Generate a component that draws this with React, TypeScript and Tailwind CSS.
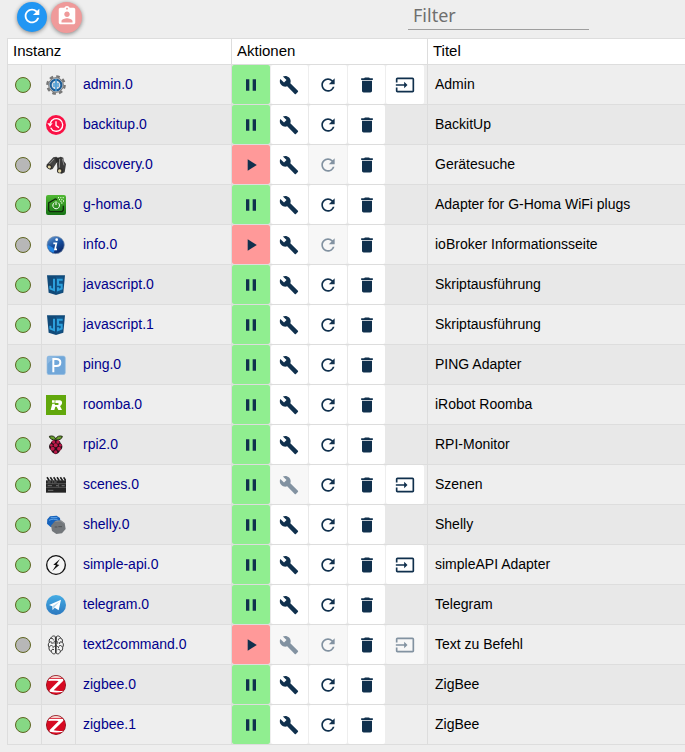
/**
 * Instances page - adapter list with status, actions and titles.
 */

import type { ReactNode } from 'react';
import { MdAssignmentInd, MdBuild, MdDelete, MdInput, MdPause, MdPlayArrow, MdRefresh } from 'react-icons/md';

type IconName =
  | 'admin'
  | 'backitup'
  | 'discovery'
  | 'ghoma'
  | 'info'
  | 'javascript'
  | 'ping'
  | 'roomba'
  | 'rpi'
  | 'scenes'
  | 'shelly'
  | 'simpleapi'
  | 'telegram'
  | 'text2command'
  | 'zigbee';

interface Instance {
  id: string;
  icon: IconName;
  title: string;
  running: boolean;
  config: boolean;
  link?: boolean;
}

const INSTANCES: Instance[] = [
  { id: 'admin.0', icon: 'admin', title: 'Admin', running: true, config: true, link: true },
  { id: 'backitup.0', icon: 'backitup', title: 'BackitUp', running: true, config: true },
  { id: 'discovery.0', icon: 'discovery', title: 'Gerätesuche', running: false, config: true },
  { id: 'g-homa.0', icon: 'ghoma', title: 'Adapter for G-Homa WiFi plugs', running: true, config: true },
  { id: 'info.0', icon: 'info', title: 'ioBroker Informationsseite', running: false, config: true },
  { id: 'javascript.0', icon: 'javascript', title: 'Skriptausführung', running: true, config: true },
  { id: 'javascript.1', icon: 'javascript', title: 'Skriptausführung', running: true, config: true },
  { id: 'ping.0', icon: 'ping', title: 'PING Adapter', running: true, config: true },
  { id: 'roomba.0', icon: 'roomba', title: 'iRobot Roomba', running: true, config: true },
  { id: 'rpi2.0', icon: 'rpi', title: 'RPI-Monitor', running: true, config: true },
  { id: 'scenes.0', icon: 'scenes', title: 'Szenen', running: true, config: false, link: true },
  { id: 'shelly.0', icon: 'shelly', title: 'Shelly', running: true, config: true },
  { id: 'simple-api.0', icon: 'simpleapi', title: 'simpleAPI Adapter', running: true, config: true, link: true },
  { id: 'telegram.0', icon: 'telegram', title: 'Telegram', running: true, config: true },
  { id: 'text2command.0', icon: 'text2command', title: 'Text zu Befehl', running: false, config: false, link: true },
  { id: 'zigbee.0', icon: 'zigbee', title: 'ZigBee', running: true, config: true },
  { id: 'zigbee.1', icon: 'zigbee', title: 'ZigBee', running: true, config: true },
];

// All adapter logos share a 60x60 grid
const LOGOS: Record<IconName, ReactNode> = {
  admin: (
    <>
      <circle cx="30" cy="30" r="26" fill="none" stroke="#777" strokeWidth="7" strokeDasharray="11 9.4" />
      <circle cx="30" cy="30" r="22" fill="#c4cbd1" stroke="#777" strokeWidth="3" />
      <circle cx="30" cy="30" r="16" fill="#d3dce3" stroke="#1c5c95" strokeWidth="6" />
      <path d="M30 12v36" stroke="#3f97d3" strokeWidth="5" />
      <path d="M24 24v12M36 24v12" stroke="#3f97d3" strokeWidth="4" />
    </>
  ),
  backitup: (
    <>
      <circle cx="30" cy="30" r="30" fill="#fa1145" />
      <path d="M13 24a19 19 0 1 1 1 14" fill="none" stroke="#fff" strokeWidth="4" />
      <path d="M4 25h16l-8 10z" fill="#fff" />
      <path d="M30 19v13l9 6" fill="none" stroke="#fff" strokeWidth="4" />
    </>
  ),
  discovery: (
    <>
      <path d="m22 7 9-2 5 4-2 11-14 22-7 2-11-8 1-8z" fill="#444" />
      <path d="m35 9 9-4 8 3 1 9 7 10-4 25-9 4-12-5-2-23z" fill="#3a3a3a" />
      <path d="m27 9 12-1v12l-9 3z" fill="#2c2c2c" />
      <path d="M24 12 10 27m31-15-1 26m9-27 5 20" stroke="#8b8b8b" strokeWidth="3" />
      <ellipse cx="10" cy="35" rx="9" ry="7" fill="#2f2c2a" transform="rotate(30 10 35)" />
      <ellipse cx="10" cy="36" rx="5" ry="4" fill="#e0d5a4" transform="rotate(30 10 36)" />
      <ellipse cx="42" cy="47" rx="9" ry="8" fill="#2f2c2a" />
      <ellipse cx="41" cy="48" rx="5" ry="5" fill="#e0d5a4" />
    </>
  ),
  ghoma: (
    <>
      <defs>
        <linearGradient id="ghoma-bg" x2="0" y2="1">
          <stop stopColor="#51b934" />
          <stop offset="1" stopColor="#177416" />
        </linearGradient>
      </defs>
      <rect width="60" height="60" rx="6" fill="url(#ghoma-bg)" />
      <path d="m33 14-5-2L8 24v22l4 4h36l4-5V32" fill="none" stroke="#102d0b" strokeWidth="4" />
      <path d="M25 23a10 10 0 1 0 11 0M30 19v11" fill="none" stroke="#fff" strokeWidth="3" />
      <path d="M36 8h3m4 0h3m4 0h3M39 14h3m4 0h3m2 4h3M43 19h3m0 5h3" stroke="#eaffdf" strokeWidth="4" />
    </>
  ),
  info: (
    <>
      <defs>
        <linearGradient id="info-bg" x2="0.6" y2="1">
          <stop stopColor="#6fa1d7" />
          <stop offset="0.55" stopColor="#164f9f" />
          <stop offset="1" stopColor="#0b2869" />
        </linearGradient>
      </defs>
      <circle cx="29" cy="30" r="26" fill="url(#info-bg)" stroke="#8296ac" strokeWidth="2" />
      <path d="M5 30a24 24 0 0 0 17 23c8-8 0-17-17-23" fill="#2384e3" />
      <circle cx="32" cy="14" r="4" fill="#fff" />
      <path d="M22 25h9l-4 18h6" fill="none" stroke="#fff" strokeWidth="5" />
    </>
  ),
  javascript: (
    <>
      <path d="M3 1h54l-5 52-22 7-22-7z" fill="#114a79" />
      <path d="M30 5h22l-4 45-18 5z" fill="#10558a" />
      <path d="M24 11v34l-11-4v-9" fill="none" stroke="#2ca0dc" strokeWidth="6" />
      <path d="M50 14H36v15h11v12l-11 4v-8" fill="none" stroke="#2ca0dc" strokeWidth="6" />
    </>
  ),
  ping: (
    <>
      <rect x="3" y="3" width="55" height="56" rx="6" fill="#71a7d9" stroke="#9fc2e2" strokeWidth="2" />
      <path d="M4 28V7l3-3h35C27 7 13 16 4 28" fill="#8cb8e1" />
      <path d="M22 52V12h9c16 0 16 21 0 21h-9" fill="none" stroke="#fff" strokeWidth="6" />
    </>
  ),
  roomba: (
    <>
      <path d="M0 0h60v60H0z" fill="#62a80c" />
      <path d="M18 16h8v7h-8zM28 16h13c10 0 9 14 1 17l6 12H37l-5-10h-4l-3 10H14l5-19h8l-1 4h9c4 0 4-6 0-6h-7z" fill="#fff" />
    </>
  ),
  rpi: (
    <>
      <path d="M29 15C21 15 12 13 10 4c9-3 17 0 19 8 3-8 12-11 20-8-1 9-10 11-20 11" fill="#68a12c" stroke="#232b14" strokeWidth="3" />
      <path d="M29 14c8 0 14 4 15 11 8 6 6 17-1 21-3 6-8 11-14 12-7-2-12-6-14-12-7-5-8-15-1-21 2-7 8-11 15-11" fill="#270d17" />
      <g fill="#bd1949">
        <circle cx="23" cy="21" r="5" />
        <circle cx="36" cy="21" r="5" />
        <circle cx="29" cy="31" r="6" />
        <circle cx="16" cy="31" r="4" />
        <circle cx="43" cy="31" r="4" />
        <circle cx="20" cy="41" r="6" />
        <circle cx="39" cy="41" r="6" />
        <circle cx="29" cy="51" r="5" />
      </g>
    </>
  ),
  scenes: (
    <>
      <path d="M0 8h60v9H0z" fill="#f3f3f3" />
      <path d="m3 7 7 10M13 7l7 10M23 7l7 10M33 7l7 10M43 7l7 10M53 7l6 10" stroke="#222" strokeWidth="5" />
      <path d="M0 16h60v37H0z" fill="#242424" />
      <path d="M0 26h60M0 37h60M20 16v10m18 0v11" stroke="#696969" strokeWidth="2" />
      <path d="M5 21h9m10 0h8m-27 11h13m12 0h7m10 0h9M6 46h16" stroke="#999" strokeWidth="2" />
    </>
  ),
  shelly: (
    <>
      <path d="m12 4 20-2 10 7 2 17-12 10H14L3 26l1-13z" fill="#1763bc" />
      <path d="M9 16c8-4 18-5 28 0M14 8h20" fill="none" stroke="#61a5e9" strokeWidth="3" />
      <path d="m27 18 18-2 11 8 3 18-11 13-17 2-13-9-3-16z" fill="#73777b" />
      <path d="m28 19 16-1 10 7" fill="none" stroke="#9a9ea1" strokeWidth="2" />
      <path d="M26 36h8m3-1h11" stroke="#505356" strokeWidth="3" />
    </>
  ),
  simpleapi: (
    <>
      <circle cx="30" cy="30" r="28" fill="#f5f5f5" stroke="#111" strokeWidth="4" />
      <path d="M42 12 22 29l8 2-11 17 21-18-8-2z" fill="#111" />
    </>
  ),
  telegram: (
    <>
      <defs>
        <linearGradient id="telegram-bg" x2="0" y2="1">
          <stop stopColor="#45ace4" />
          <stop offset="1" stopColor="#2b78bf" />
        </linearGradient>
      </defs>
      <circle cx="30" cy="30" r="30" fill="url(#telegram-bg)" />
      <path d="m9 30 36-16-7 32-12-8-6 7-1-11z" fill="#fff" />
      <path d="m19 34 21-14-16 18-4 7z" fill="#b9d8ec" />
    </>
  ),
  text2command: (
    <>
      <path d="M28 5c-5-5-12 0-13 4-6 3-6 9-5 13-5 5-3 11-1 15-1 7 3 11 7 13 3 8 10 8 13 4zM31 5c5-5 12 0 13 4 6 3 6 9 5 13 5 5 3 11 1 15 1 7-3 11-7 13-3 8-10 8-13 4z" fill="#f3f3f3" stroke="#333" strokeWidth="3" />
      <path d="M29 6v48M15 10c5-1 7 2 7 6M10 22c6-4 10 0 8 5M29 18c-5 0-6 4-5 8M10 37c2-7 9-7 11-2M29 32c-5 0-4 5-9 6M16 50c0-6 4-9 8-6M44 10c-5-1-7 2-7 6M49 22c-6-4-10 0-8 5M30 18c5 0 6 4 5 8M49 37c-2-7-9-7-11-2M30 32c5 0 4 5 9 6M43 50c0-6-4-9-8-6" fill="none" stroke="#333" strokeWidth="3" />
    </>
  ),
  zigbee: (
    <>
      <defs>
        <clipPath id="zigbee-clip">
          <circle cx="30" cy="30" r="28" />
        </clipPath>
      </defs>
      <circle cx="30" cy="30" r="30" fill="#861019" />
      <g clipPath="url(#zigbee-clip)">
        <path d="M0 0h60v60H0z" fill="#d60a22" />
        <path d="M0 0h60v10H0z" fill="#f3cfca" />
        <path d="M7 12h45v5L23 46c11 2 21 2 31 1l-4 4c-13 2-28 2-39-1v-5l27-27c-11-1-21-1-31 0z" fill="#fff" />
      </g>
    </>
  ),
};

interface ActionProps {
  label: string;
  disabled?: boolean;
  className?: string;
  children: ReactNode;
}

function ActionButton({ label, disabled = false, className = 'bg-white disabled:bg-[#f7f7f7]', children }: ActionProps) {
  return (
    <button
      type="button"
      aria-label={label}
      title={label}
      disabled={disabled}
      className={`group flex h-[39px] items-center justify-center rounded-xs text-xl text-[#10304d] ${className}`}
    >
      <span className="group-disabled:opacity-50">{children}</span>
    </button>
  );
}

function InstanceRow({ instance }: { instance: Instance }) {
  const { id, icon, title, running, config, link } = instance;

  return (
    <tr className="h-10 odd:bg-[#eee] even:bg-[#e8e8e8]">
      <td className="border-b border-l border-[#ddd] pl-[7px]">
        <span
          role="img"
          aria-label={running ? 'Aktiv' : 'Inaktiv'}
          className={`block size-4 rounded-full border border-[#5f6420] ${running ? 'bg-[#86d884]' : 'bg-[#b7b7b7]'}`}
        />
      </td>
      <td className="border-b border-l border-[#ddd] pt-px pl-1">
        <svg viewBox="0 0 60 60" className="block size-5" aria-hidden="true">
          {LOGOS[icon]}
        </svg>
      </td>
      <td className="border-b border-l border-[#ddd] pb-px pl-[7px]">
        <a href={`#${id}`} className="text-[#00008b]">
          {id}
        </a>
      </td>
      <td className="border-b border-l border-[#ddd]">
        <div className="grid w-48 grid-cols-5 gap-px">
          <ActionButton label={running ? 'Stoppen' : 'Starten'} className={running ? 'bg-[#90ee90]' : 'bg-[#ff9999]'}>
            {running ? <MdPause /> : <MdPlayArrow />}
          </ActionButton>
          <ActionButton label="Konfigurieren" disabled={!config}>
            <MdBuild />
          </ActionButton>
          <ActionButton label="Neu starten" disabled={!running}>
            <MdRefresh />
          </ActionButton>
          <ActionButton label="Löschen">
            <MdDelete />
          </ActionButton>
          {link && (
            <ActionButton label="Öffnen" disabled={!running}>
              <MdInput />
            </ActionButton>
          )}
        </div>
      </td>
      <td className="border-b border-l border-[#ddd] pb-px pl-[7px]">{title}</td>
    </tr>
  );
}

export default function App() {
  return (
    <div className="min-h-screen bg-[#eee] pl-[7px] font-['Liberation_Sans',Arial,sans-serif] text-sm text-black">
      {/* Toolbar */}
      <div className="flex h-[38px] items-start">
        <div className="flex flex-1 gap-1 pt-0.5 pl-2.5">
          <button
            type="button"
            aria-label="Aktualisieren"
            className="flex size-[30px] items-center justify-center rounded-full bg-[#2196f3] pb-0.5 text-[22px] text-white shadow-[0_1px_4px_rgba(0,0,0,0.45)]"
          >
            <MdRefresh />
          </button>
          <button
            type="button"
            aria-label="Expertenmodus"
            className="flex size-[31px] items-center justify-center rounded-full bg-[#ef9a9a] pb-1 text-[22px] text-white shadow-[0_1px_4px_rgba(0,0,0,0.45)]"
          >
            <MdAssignmentInd />
          </button>
        </div>
        <input
          type="text"
          aria-label="Filter"
          placeholder="Filter"
          className="mr-24 h-[30px] w-[181px] border-b border-[#9e9e9e] px-[5px] font-['Noto_Sans',sans-serif] text-lg outline-none placeholder:text-[#6f6f6f]"
        />
      </div>

      {/* Instances */}
      <table className="w-full table-fixed border-separate border-spacing-0 border-t border-[#ddd]">
        <colgroup>
          <col className="w-[34px]" />
          <col className="w-[34px]" />
          <col className="w-[156px]" />
          <col className="w-[196px]" />
          <col />
        </colgroup>
        <thead>
          <tr className="h-[26px] bg-white text-left text-[15px] leading-5">
            <th colSpan={3} className="border-b border-l border-[#ddd] pb-px pl-[5px] font-normal">
              Instanz
            </th>
            <th className="border-b border-l border-[#ddd] pb-px pl-[5px] font-normal">Aktionen</th>
            <th className="border-b border-l border-[#ddd] pb-px pl-[5px] font-normal">Titel</th>
          </tr>
        </thead>
        <tbody>
          {INSTANCES.map((instance) => (
            <InstanceRow key={instance.id} instance={instance} />
          ))}
        </tbody>
      </table>
    </div>
  );
}
